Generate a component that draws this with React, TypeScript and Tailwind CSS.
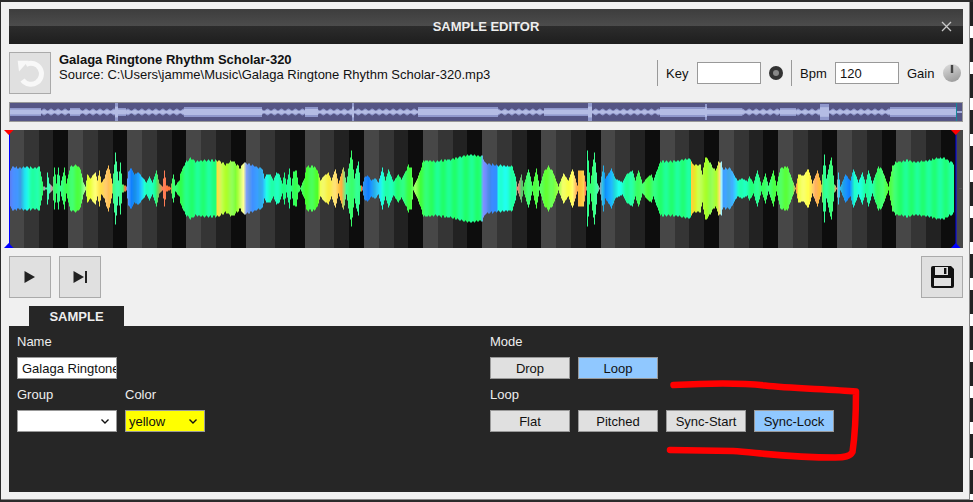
import { useMemo } from "react";

const AMP: [number, number][] = [
  [10, 19], [13, 22], [20, 20], [26, 22], [33, 20], [39, 22], [41, 12], [43, 2], [46, 1], [47, 16], [49, 5], [52, 2],
  [54, 22], [56, 5], [58, 22], [60, 3], [62, 12], [64, 20], [66, 5], [68, 14], [70, 22], [76, 23], [80, 20], [83, 6],
  [85, 2], [87, 14], [90, 10], [93, 14], [95, 16], [97, 8], [99, 18], [101, 6], [104, 10], [106, 18], [108, 22],
  [110, 15], [112, 5], [115, 35], [118, 8], [120, 26], [122, 4], [126, 2], [128, 17], [131, 20], [134, 14], [138, 16],
  [143, 10], [146, 6], [149, 12], [152, 6], [156, 18], [159, 5], [162, 2], [164, 18], [166, 3], [170, 1], [173, 14],
  [175, 3], [179, 8], [180, 15], [185, 26], [190, 30], [195, 27], [205, 28], [217, 28], [225, 24], [232, 28], [240, 20],
  [243, 26], [247, 25], [255, 22], [262, 20], [264, 10], [266, 14], [270, 14], [273, 8], [276, 16], [279, 14], [282, 5],
  [284, 16], [286, 4], [289, 19], [291, 3], [293, 17], [296, 18], [298, 4], [300, 1], [304, 10], [306, 22], [314, 22],
  [317, 18], [320, 8], [323, 12], [328, 16], [331, 8], [335, 20], [338, 5], [343, 22], [346, 6], [351, 38], [354, 10],
  [358, 28], [360, 3], [362, 2], [364, 11], [367, 13], [371, 8], [375, 10], [378, 6], [382, 20], [385, 8], [388, 19],
  [393, 7], [398, 14], [401, 9], [408, 23], [411, 20], [413, 2], [417, 10], [423, 28], [435, 27], [450, 29], [468, 34],
  [482, 32], [485, 25], [497, 23], [512, 22], [515, 12], [517, 2], [521, 14], [523, 2], [528, 20], [532, 3], [536, 20],
  [539, 2], [544, 18], [548, 22], [552, 18], [558, 2], [563, 15], [568, 8], [572, 20], [577, 3], [578, 18], [583, 18],
  [586, 2], [587, 39], [590, 5], [594, 37], [597, 5], [599, 1], [603, 22], [605, 10], [611, 19], [615, 10], [622, 6],
  [626, 14], [632, 18], [635, 8], [638, 19], [642, 5], [647, 11], [651, 14], [653, 8], [657, 20], [660, 27], [673, 27],
  [690, 30], [692, 24], [700, 23], [702, 14], [705, 32], [712, 22], [715, 18], [718, 26], [721, 27], [722, 20], [730, 20],
  [737, 8], [742, 10], [747, 7], [749, 12], [753, 5], [757, 18], [761, 3], [765, 15], [768, 3], [773, 18], [776, 3],
  [780, 20], [787, 22], [792, 8], [795, 1], [798, 14], [803, 13], [808, 20], [812, 5], [817, 18], [821, 4], [824, 34],
  [826, 10], [831, 32], [834, 4], [836, 1], [838, 16], [840, 2], [845, 14], [850, 8], [853, 20], [858, 6], [862, 16],
  [865, 5], [868, 18], [872, 5], [878, 22], [882, 18], [888, 2], [892, 22], [895, 26], [907, 28], [917, 26], [927, 28],
  [942, 31], [953, 25], [954, 0],
];

const COLORS: [number, string][] = [
  [10, "#5a80ff"], [13, "#4a90ff"], [20, "#3a9cff"], [24, "#20e0e0"], [28, "#20ffd0"], [35, "#20ffa0"], [42, "#30ff80"],
  [44, "#c090d0"], [45, "#40ffa0"], [49, "#40ffa0"], [51, "#d090a0"], [54, "#30ff80"], [70, "#40ff60"], [80, "#50ff50"],
  [84, "#a0ff80"], [87, "#e0ff40"],
  [95, "#ffff60"], [100, "#ffe060"], [108, "#ffc050"], [111, "#ffd060"], [113, "#40ff90"], [122, "#40ff90"],
  [125, "#ff7040"], [127, "#60a0ff"], [131, "#1080ff"], [138, "#20a0ff"], [144, "#20ffe0"], [155, "#20ff90"],
  [162, "#ff8040"], [170, "#ff7050"], [172, "#40ff60"], [180, "#30ff60"], [190, "#20ff80"], [215, "#20ff90"],
  [217, "#ffe040"], [222, "#c0ff40"], [235, "#80ff40"], [243, "#ffff80"], [246, "#80a0ff"], [252, "#4090ff"],
  [262, "#30b0ff"], [266, "#20ffd0"], [285, "#20ff90"], [300, "#40ff50"], [317, "#50ff40"], [320, "#f0ff50"],
  [335, "#ffe060"], [341, "#ffb050"], [346, "#40ff80"], [360, "#30ff80"], [361, "#ff7040"], [363, "#3090ff"],
  [368, "#1080ff"], [376, "#30c0ff"], [382, "#20ffd0"], [395, "#20ff90"], [410, "#40ff50"], [415, "#a0ff50"],
  [420, "#40ff50"], [435, "#20ff80"], [480, "#20ff80"], [483, "#8090ff"], [490, "#4088ff"], [496, "#3090ff"],
  [498, "#20fff0"], [508, "#20ffd0"], [515, "#20ffa0"], [517, "#ff8060"], [521, "#60c080"], [526, "#40ff60"],
  [553, "#70ff40"], [558, "#a0ff60"], [562, "#f0ff50"], [572, "#ffff60"], [576, "#ffb050"], [583, "#ffd050"],
  [585, "#ff8040"], [587, "#30ff80"], [597, "#40ff90"], [599, "#a0a0a0"], [602, "#30c0ff"], [605, "#1090ff"],
  [612, "#20c0ff"], [618, "#20ffe0"], [628, "#20ffa0"], [645, "#50ff50"], [660, "#20ff80"], [690, "#20ff90"],
  [691, "#ffd040"], [697, "#d0ff40"], [710, "#90ff40"], [716, "#b0ff40"], [719, "#ffe080"], [721, "#a0f0ff"],
  [723, "#40a0ff"], [732, "#40b0ff"], [738, "#20ffd0"], [750, "#20ff90"], [778, "#50ff50"], [792, "#60ff50"],
  [796, "#ffa060"], [798, "#f0ff50"], [808, "#ffff60"], [815, "#ffb050"], [820, "#ffc050"], [823, "#30ff80"],
  [833, "#40ff90"], [836, "#ff9050"], [838, "#40d0e0"], [843, "#20a0ff"], [849, "#1080ff"], [854, "#20ffe0"],
  [870, "#20ffa0"], [885, "#50ff50"], [892, "#50ff50"], [900, "#20ff80"], [954, "#20ff90"],
];

const OVERVIEW: [number, number, number][] = [
  [10, 41, 4], [41, 50, 3], [50, 70, 3], [70, 80, 4], [80, 115, 3], [115, 118, 9], [118, 126, 4], [126, 184, 3],
  [184, 262, 5], [262, 305, 3], [305, 318, 5], [318, 352, 3], [352, 354, 9], [354, 370, 3], [370, 418, 3],
  [418, 498, 5], [498, 544, 3], [544, 588, 4], [588, 592, 9], [592, 644, 3], [644, 660, 3], [660, 705, 5], [705, 707, 8],
  [707, 742, 4], [742, 780, 3], [780, 796, 4], [796, 820, 3], [820, 829, 8], [829, 890, 3], [890, 956, 5], [956, 962, 1],
];

function lerp(stops: [number, number][], x: number) {
  if (x <= stops[0][0]) return stops[0][1];
  for (let i = 1; i < stops.length; i++) {
    const [x1, v1] = stops[i];
    const [x0, v0] = stops[i - 1];
    if (x <= x1) return v0 + ((v1 - v0) * (x - x0)) / (x1 - x0);
  }
  return 0;
}

function hex(c: string) {
  return [1, 3, 5].map((i) => parseInt(c.slice(i, i + 2), 16));
}

function colorAt(x: number) {
  let i = COLORS.findIndex((s) => s[0] >= x);
  if (i <= 0) i = i === 0 ? 1 : COLORS.length - 1;
  const [x0, c0] = COLORS[i - 1];
  const [x1, c1] = COLORS[i];
  const t = Math.min(1, Math.max(0, (x - x0) / (x1 - x0)));
  const a = hex(c0);
  const b = hex(c1);
  // faint vertical bands, the big blocks are not one flat green
  const band = Math.round(Math.sin(x * 0.55) * 22);
  const mixed = a.map((v, k) => Math.round(v + (b[k] - v) * t));
  mixed[2] = Math.min(255, Math.max(0, mixed[2] + band));
  return `rgb(${mixed.join(",")})`;
}

const STRIPES = ["#474747", "#353535", "#222222", "#0d0d0d"];

function Waveform() {
  const cols = useMemo(() => {
    const out = [];
    for (let x = 10; x < 954; x++) {
      const amp = lerp(AMP, x);
      const ripple = amp > 18 ? Math.round(Math.sin(x * 1.7)) * 0.7 : 0;
      out.push({ x, h: Math.max(Math.round(amp + ripple), 0.5), c: colorAt(x) });
    }
    return out;
  }, []);
  const stripes = Array.from({ length: 65 }, (_, i) => i);
  return (
    <svg viewBox="9 130 954 118" className="mt-[8px] block w-[954px] h-[118px] shrink-0 overflow-visible">
      {stripes.map((i) => (
        <rect
          key={i}
          x={Math.round(9 + i * 14.79)}
          y={130}
          width={Math.min(Math.round(9 + (i + 1) * 14.79), 963) - Math.round(9 + i * 14.79)}
          height={118}
          fill={STRIPES[i % 4]}
        />
      ))}
      {cols.map((k) => (
        <rect key={k.x} x={k.x} y={188.5 - k.h} width={1} height={k.h * 2} fill={k.c} />
      ))}
      <rect x={959} y={188} width={3} height={1} fill="#555" />
      <line x1={9.5} y1={130} x2={9.5} y2={248} stroke="#0000ff" />
      <line x1={956} y1={130} x2={956} y2={248} stroke="#0000ff" />
      <polygon points="4,130 13.5,130 8.8,135" fill="#ff0000" />
      <polygon points="951,130 960.5,130 955.8,135" fill="#ff0000" />
      <polygon points="4,248 13.5,248 8.8,243" fill="#0000ff" />
      <polygon points="951,248 960.5,248 955.8,243" fill="#0000ff" />
    </svg>
  );
}

function Overview() {
  const cols = useMemo(() => {
    const out = [];
    for (const [a, b, h] of OVERVIEW) {
      for (let x = a; x < b; x++) {
        const spiky = h === 3 ? 0.85 + 0.3 * Math.sin(x * 0.9) : 1;
        out.push({ x, h: h * spiky });
      }
    }
    return out;
  }, []);
  return (
    <div className="mt-[8px] h-[20px] shrink-0 border border-[#999] bg-[#555585]">
      <svg viewBox="10 103 952 18" className="block w-[952px] h-[18px]">
        {cols.map((k) => (
          <g key={k.x}>
            <rect x={k.x} y={112 - k.h} width={1} height={k.h * 2} fill="#9098cc" />
            <rect x={k.x} y={112 - k.h * 0.6} width={1} height={k.h * 1.2} fill="#b4bce4" />
          </g>
        ))}
        <rect x={956} y={103} width={1} height={18} fill="#118899" />
      </svg>
    </div>
  );
}

function IconButton({ children }: { children: React.ReactNode }) {
  return (
    <button className="flex items-center justify-center w-[42px] h-[42px] shrink-0 border border-[#aaa] bg-[#e0e0e0]">
      {children}
    </button>
  );
}

function ModeButton({ label, active }: { label: string; active?: boolean }) {
  return (
    <button
      className={`w-[80px] h-[22px] border border-[#999] text-[13px] text-[#111] ${
        active ? "bg-[#90c8ff]" : "bg-[#e0e0e0]"
      }`}
    >
      {label}
    </button>
  );
}

function Chevron() {
  return (
    <svg viewBox="0 0 8 5" className="absolute right-[8px] top-[9px] w-[8px] h-[5px] pointer-events-none">
      <path d="M0.5 0.5 L4 4 L7.5 0.5" fill="none" stroke="#111" strokeWidth="1.4" />
    </svg>
  );
}

export default function App() {
  return (
    <div
      className="relative flex w-[973px] h-[502px] overflow-hidden bg-[#2b2b2b] pl-[1px] pt-[2px] pb-[2px] text-[13px] leading-[15px] text-[#111]"
      style={{ fontFamily: '"Liberation Sans", Arial, sans-serif' }}
    >
      <div className="flex flex-col w-[969px] h-[498px] shrink-0 bg-[#f0f0f0] pl-[8px] pt-[7px] border-b border-r border-[#888]">
        <div className="grid grid-cols-[1fr_auto_1fr] items-center w-[954px] h-[35px] shrink-0 bg-[linear-gradient(#3d3d3d_0%,#4c4c4c_49%,#2c2c2c_49%,#1e1e1e_100%)]">
          <span />
          <span className="font-bold text-[#eeeeee]">SAMPLE EDITOR</span>
          <svg viewBox="0 0 11 11" className="justify-self-end mr-[11px] w-[11px] h-[11px]">
            <path d="M1 1 L10 10 M10 1 L1 10" stroke="#c8c8c8" strokeWidth="1.3" />
          </svg>
        </div>

        <div className="mt-[8px] flex w-[954px] h-[42px] shrink-0 pr-[2px]">
          <IconButton>
            <svg viewBox="0 0 40 40" className="w-[40px] h-[40px]">
              <path d="M16 11.5 A10.5 10.5 0 1 1 12.5 27" fill="none" stroke="#f8f8f8" strokeWidth="5" />
              <polygon points="7.7,7.7 18.7,7.7 9,18.5" fill="#f8f8f8" />
            </svg>
          </IconButton>
          <div className="ml-[8px]">
            <div className="font-bold">Galaga Ringtone Rhythm Scholar-320</div>
            <div>Source: C:\Users\jamme\Music\Galaga Ringtone Rhythm Scholar-320.mp3</div>
          </div>
          <div className="ml-auto flex items-center">
            <div className="w-px h-[26px] bg-[#999]" />
            <span className="ml-[8px] w-[31px]">Key</span>
            <input readOnly className="w-[64px] h-[22px] border border-[#999] bg-white px-[4px] text-[13px]" />
            <svg viewBox="0 0 14 14" className="ml-[8px] w-[14px] h-[14px]">
              <circle cx="7" cy="7" r="7" fill="#333" />
              <circle cx="7" cy="7" r="3" fill="#888" />
            </svg>
            <div className="ml-[8px] w-px h-[26px] bg-[#999]" />
            <span className="ml-[8px] w-[35px]">Bpm</span>
            <input
              readOnly
              value="120"
              className="w-[64px] h-[22px] border border-[#999] bg-white px-[4px] text-[13px]"
            />
            <span className="ml-[8px] w-[36px]">Gain</span>
            <svg viewBox="0 0 18 18" className="w-[18px] h-[18px]">
              <defs>
                <linearGradient id="knob" x1="0" y1="0" x2="0.4" y2="1">
                  <stop offset="0" stopColor="#e0e0e0" />
                  <stop offset="1" stopColor="#a0a0a0" />
                </linearGradient>
              </defs>
              <circle cx="9" cy="9" r="9" fill="url(#knob)" />
              <rect x="7.8" y="1" width="2.4" height="8" fill="#444" />
            </svg>
          </div>
        </div>

        <div className="w-[954px]">
          <Overview />
        </div>
        <Waveform />

        <div className="mt-[8px] flex w-[954px] gap-[8px] shrink-0">
          <IconButton>
            <svg viewBox="0 0 12 12" className="w-[12px] h-[12px]">
              <polygon points="0.5,0 11,6 0.5,12" fill="#222" />
            </svg>
          </IconButton>
          <IconButton>
            <svg viewBox="0 0 15 12" className="w-[15px] h-[12px]">
              <polygon points="0.5,0 11,6 0.5,12" fill="#222" />
              <rect x="12" y="0" width="2" height="12" fill="#222" />
            </svg>
          </IconButton>
          <div className="ml-auto">
            <IconButton>
              <svg viewBox="0 0 23 22" className="w-[23px] h-[22px]">
                <path d="M2 0 H20 L23 3 V20 Q23 22 21 22 H2 Q0 22 0 20 V2 Q0 0 2 0 Z" fill="#111" />
                <rect x="4" y="1" width="13" height="8" fill="#e0e0e0" />
                <rect x="13" y="2" width="2.4" height="6" fill="#111" />
                <rect x="3" y="12" width="17" height="8" fill="#e0e0e0" />
              </svg>
            </IconButton>
          </div>
        </div>

        <div className="mt-[8px] ml-[20px] flex items-center justify-center w-[95px] h-[20px] shrink-0 bg-[#262626] font-bold text-[#eeeeee]">
          SAMPLE
        </div>
        <div className="grid grid-cols-[473px_1fr] w-[954px] h-[166px] shrink-0 bg-[#262626] pl-[8px] pt-[8px] text-[#eeeeee]">
          <div>
            <div className="h-[23px]">Name</div>
            <input
              readOnly
              value="Galaga Ringtone Rhythm Scholar-320"
              className="block w-[100px] h-[22px] border border-[#999] bg-white pl-[4px] text-[13px] text-[#111]"
            />
            <div className="mt-[8px] flex gap-[8px]">
              <div>
                <div className="h-[23px]">Group</div>
                <div className="relative">
                  <select className="block w-[100px] h-[22px] appearance-none border border-[#999] bg-white pl-[3px] text-[13px] text-[#111]" />
                  <Chevron />
                </div>
              </div>
              <div>
                <div className="h-[23px]">Color</div>
                <div className="relative">
                  <select className="block w-[80px] h-[22px] appearance-none border border-[#999] bg-[#ffff00] pl-[3px] text-[13px] text-[#111]">
                    <option>yellow</option>
                  </select>
                  <Chevron />
                </div>
              </div>
            </div>
          </div>
          <div>
            <div className="h-[23px]">Mode</div>
            <div className="flex gap-[8px]">
              <ModeButton label="Drop" />
              <ModeButton label="Loop" active />
            </div>
            <div className="mt-[8px] h-[23px]">Loop</div>
            <div className="flex gap-[8px]">
              <ModeButton label="Flat" />
              <ModeButton label="Pitched" />
              <ModeButton label="Sync-Start" />
              <ModeButton label="Sync-Lock" active />
            </div>
          </div>
        </div>
      </div>
      <div className="w-[3px] h-full bg-[repeating-linear-gradient(180deg,#222_0px,#222_24px,#ffffff_24px,#ffffff_36px)]" />

      <svg viewBox="0 0 973 502" className="absolute inset-0 w-[973px] h-[502px] pointer-events-none">
        <path
          d="M673.5 385 C700 383.5 740 382.5 765 385.5 C790 388.5 830 389 856 391.5 C856 415 855 435 852.5 452 C850 456.5 845 457.5 835 457.5 C790 457.5 760 453 733 451 L670 450"
          fill="none"
          stroke="#ff0000"
          strokeWidth="6.5"
          strokeLinecap="round"
          strokeLinejoin="round"
        />
      </svg>
    </div>
  );
}
